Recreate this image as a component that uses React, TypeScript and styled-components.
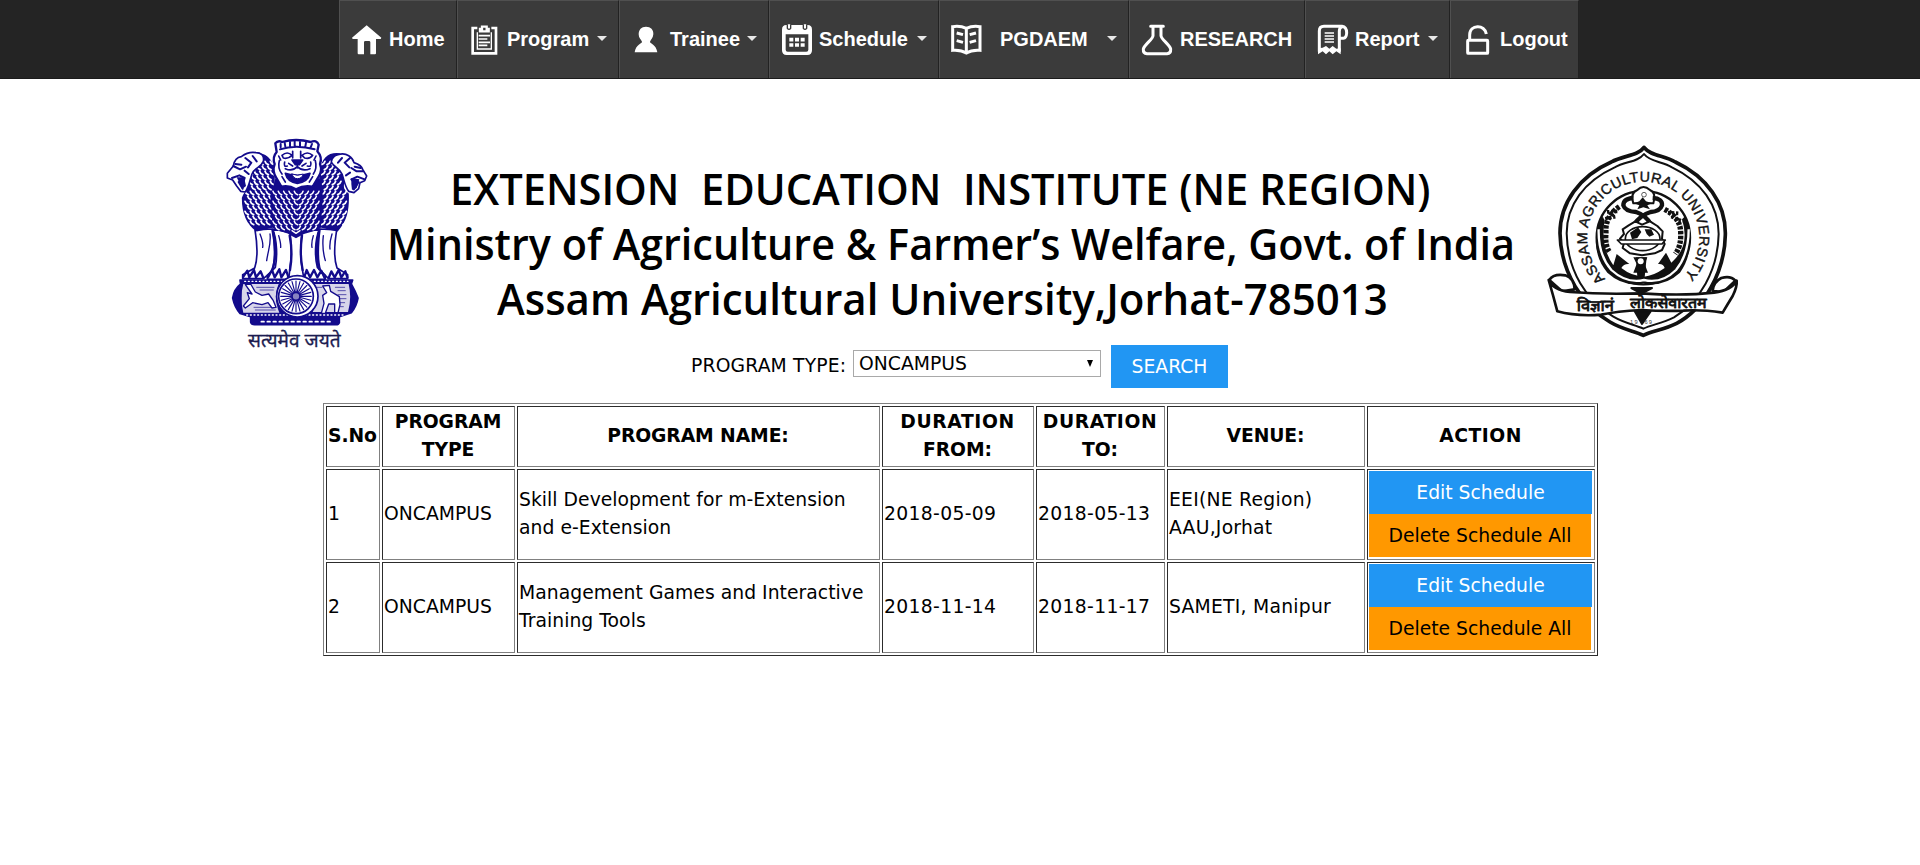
import React from 'react';
import styled, { createGlobalStyle } from 'styled-components';

const GlobalStyle = createGlobalStyle`
  * { box-sizing: border-box; }
  body {
    margin: 0;
    background: #fff;
    color: #000;
    font-family: 'DejaVu Sans', Verdana, sans-serif;
    font-size: 18.75px;
    line-height: 28px;
  }
`;

const NavBar = styled.nav`
  display: flex;
  height: 79px;
  padding-left: 339px;
  background: #242424;
  border-bottom: 1px solid #1b1b1b;
`;

const NavItem = styled.a<{ $width: number }>`
  display: flex;
  align-items: center;
  width: ${(p) => p.$width}px;
  padding: 0 11px 0 12px;
  background: #3b3b3b;
  border-left: 1px solid #505050;
  border-top: 1px solid #505050;
  border-right: 1px solid #222;
  color: #fff;
  font: bold 20px/24px 'Liberation Sans', Arial, sans-serif;
`;

const NavIcon = styled.svg`
  flex: none;
  width: 30px;
  height: 30px;
  margin-top: 1px;
  overflow: visible;
`;

const NavLabel = styled.span<{ $gap: number }>`
  margin: -2px 0 0 ${(p) => p.$gap}px;
  white-space: nowrap;
`;

const Caret = styled.span`
  margin: -2px 0 0 auto;
  border: 5px solid transparent;
  border-top-color: #e8e8e8;
  border-bottom: 0;
`;

const Banner = styled.header`
  display: flex;
  height: 264px;
  padding-left: 223px;
`;

const Emblem = styled.svg`
  flex: none;
  width: 147px;
  height: 214px;
  margin-top: 58px;
  overflow: visible;
`;

const Seal = styled.svg`
  flex: none;
  width: 200px;
  height: 200px;
  margin: 62px 0 0 2px;
`;

const Titles = styled.div`
  flex: none;
  width: 1170px;
  padding-top: 82px;
`;

const Title = styled.h1<{ $indent: number; $stretch: number }>`
  margin: 0 0 0 ${(p) => p.$indent}px;
  font: 600 43.5px/55px 'Open Sans', 'Noto Sans', sans-serif;
  white-space: pre;
  transform: scaleX(${(p) => p.$stretch});
  transform-origin: 0 50%;
`;

const SearchForm = styled.form`
  display: flex;
  align-items: flex-start;
  height: 58px;
  margin-top: 2px;
  padding-left: 691px;
`;

const SearchLabel = styled.label`
  width: 162px;
  padding-top: 7px;
  letter-spacing: 0.15px;
  white-space: nowrap;
`;

const SelectBox = styled.div`
  display: flex;
  align-items: center;
  justify-content: space-between;
  width: 248px;
  height: 27px;
  margin: 5px 10px 0 0;
  padding: 0 7px 0 5px;
  border: 1px solid #a9a9a9;
`;

const SelectArrow = styled.span`
  border: 3.5px solid transparent;
  border-top: 7px solid #000;
  border-bottom: 0;
`;

const Button = styled.button<{ $tone?: 'warn'; $width: number }>`
  display: block;
  width: ${(p) => p.$width}px;
  height: 43px;
  padding: 0;
  border: 0;
  background: ${(p) => (p.$tone === 'warn' ? '#ff9800' : '#2196f3')};
  color: ${(p) => (p.$tone === 'warn' ? '#000' : '#fff')};
  font: inherit;
  white-space: nowrap;
`;

const Table = styled.table`
  width: 1275px;
  margin-left: 323px;
  table-layout: fixed;
  border: 1px solid;
  border-color: #808080 #2c2c2c #2c2c2c #808080;
  border-spacing: 2px;
`;

const cellBorder = `
  border: 1px solid;
  border-color: #2c2c2c #808080 #808080 #2c2c2c;
`;

const HeadCell = styled.th<{ $width: number; $spacing?: number }>`
  ${cellBorder}
  width: ${(p) => p.$width}px;
  height: 61px;
  padding: 0 2px 2px 1px;
  letter-spacing: -0.1px;
  &::first-line { letter-spacing: ${(p) => p.$spacing ?? -0.1}px; }
`;

const Cell = styled.td<{ $spacing?: number }>`
  ${cellBorder}
  height: 91px;
  padding: 0 1px 2px;
  letter-spacing: ${(p) => p.$spacing ?? 0}px;
`;

const ActionCell = styled(Cell)`
  padding: 1px;
  vertical-align: top;
`;

const icons: Record<string, React.ReactNode> = {
  home: <path fill="#fff" d="M44 1 88 38 86 42H72V85Q72 88 69 88H55V52Q55 48 51 48H40Q36 48 36 52V88H20Q17 88 17 85V42H2L0 38Z" />,
  program: (
    <g fill="none" stroke="#fff" strokeWidth="8">
      <path d="M22 9H8V85H78V9H64" />
      <path d="M22 22V72H64V22" strokeWidth="4" />
      <path d="M30 19H56V12H50V5H36V12H30Z" strokeWidth="7" />
      <path d="M26 32H60M26 42H52M26 52H60M26 61H52" strokeWidth="5" />
    </g>
  ),
  trainee: (
    <path fill="#fff" d="M42 5C56 5 65 14 64 28C63 39 57 44 54 50C53 56 73 57 76 82H8C11 57 31 56 30 50C27 44 20 39 20 28C20 14 28 5 42 5Z" />
  ),
  schedule: (
    <g>
      <path fill="#fff" fillRule="evenodd" d="M13 0H77Q90 0 90 14V76Q90 90 76 90H14Q0 90 0 76V14Q0 0 13 0ZM11 28V74Q11 80 17 80H73Q79 80 79 74V28Z" />
      <path d="M16 -2V10Q21 16 26 10V-2M64 -2V10Q69 16 74 10V-2" fill="#fff" stroke="#3b3b3b" strokeWidth="4" />
      <path d="M22 44H68M22 60H68" stroke="#fff" strokeWidth="11" strokeDasharray="12 5" />
    </g>
  ),
  book: (
    <g fill="none" stroke="#fff" strokeWidth="9">
      <path d="M43 10C30 4 16 3 2 5V76C16 75 30 76 43 84C56 76 70 75 84 76V5C70 3 56 4 43 10ZM43 10V88" />
      <path d="M14 24 33 29M14 47 33 52M53 29 72 24M53 52 72 47" />
    </g>
  ),
  flask: (
    <path fill="none" stroke="#fff" strokeWidth="9" strokeLinecap="round" strokeLinejoin="round" d="M26 4H64M33 6V32C33 42 6 60 4 72Q3 85 15 86H75Q87 85 86 72C84 60 57 42 57 32V6" />
  ),
  report: (
    <g fill="none" stroke="#fff" strokeWidth="9">
      <path d="M4 80V18Q4 4 18 4H72Q86 6 86 24Q85 39 76 40H66M64 80V18Q64 8 73 5" />
      <path fill="#fff" stroke="none" d="M0 70 14 68 24 63 34 71 44 63 55 71 68 70V88L55 79 44 88 34 79 24 88 14 79 0 88Z" />
      <path d="M20 24H48M20 33H48M20 42H48M20 51H48" strokeWidth="4" />
    </g>
  ),
  lock: (
    <g fill="none" stroke="#fff" strokeWidth="9">
      <rect x="14" y="46" width="60" height="39" rx="2" />
      <path d="M20 46V30C20 -2 66 -3 70 27" />
    </g>
  ),
};

const navItems = [
  { label: 'Home', icon: 'home', width: 118, gap: 7 },
  { label: 'Program', icon: 'program', width: 162, gap: 7, menu: true },
  { label: 'Trainee', icon: 'trainee', width: 150, gap: 8, menu: true },
  { label: 'Schedule', icon: 'schedule', width: 170, gap: 7, menu: true },
  { label: 'PGDAEM', icon: 'book', width: 190, gap: 18, menu: true },
  { label: 'RESEARCH', icon: 'flask', width: 176, gap: 8 },
  { label: 'Report', icon: 'report', width: 145, gap: 7, menu: true },
  { label: 'Logout', icon: 'lock', width: 129, gap: 7 },
];

const NAVY = '#130b8c';

// Rows of short curved locks that make up the lions' manes.
function locks(x0: number, x1: number, y0: number, y1: number, axis: number) {
  let d = '';
  let row = 0;
  for (let y = y0; y < y1; y += 15, row++) {
    for (let x = x0 + (row % 2) * 8; x < x1; x += 16) {
      const s = x < axis ? 1 : -1;
      d += `M${x - 5 * s} ${y - 6}q${2 * s} ${8} ${10 * s} ${10}`;
    }
  }
  return d;
}

const spokes = Array.from({ length: 24 }, (_, i) => {
  const a = (i * Math.PI) / 12;
  return `M${258 + 14 * Math.cos(a)} ${527 + 14 * Math.sin(a)}L${258 + 46 * Math.cos(a)} ${527 + 46 * Math.sin(a)}`;
}).join('');

function StateEmblem() {
  return (
    <Emblem viewBox="39 49 441 642" role="img" fill="none" stroke={NAVY} strokeWidth="5" strokeLinejoin="round" strokeLinecap="round">
      {/* legs */}
      <path fill="#fff" d="M135 328C142 370 145 410 134 442L98 462V474H160L186 452C196 420 196 370 186 325ZM380 328C373 370 370 410 381 442L413 462V474H356L332 452C322 420 324 370 330 325Z" />
      <path fill="#fff" d="M188 325C202 360 202 410 196 440L172 464V476H236L240 440C246 400 244 365 240 335ZM328 325C314 360 314 410 322 440L346 464V476H282L276 440C270 400 272 365 276 335Z" />
      <path strokeWidth="7" d="M190 336C199 370 198 420 187 446M326 336C318 370 319 420 328 446M239 345C246 380 245 420 240 448M276 345C271 380 272 420 278 448" />
      <path strokeWidth="4" d="M150 340C158 360 160 370 158 380M180 340C184 370 174 390 170 420M206 345C212 365 213 370 212 380M310 345C304 365 304 370 306 380M366 340C360 360 358 370 360 385M340 345C336 380 340 400 346 420" />
      <path strokeWidth="7" d="M100 468 112 450 118 470 132 448 138 470 152 452 160 472M174 470 186 448 194 470 208 446 214 470 228 448 236 472M282 472 290 448 300 470 312 448 322 470 334 450 344 472M356 472 364 452 374 470 386 448 394 470 406 452 412 470" />
      {/* side manes */}
      <path fill={NAVY} d="M130 98C170 96 186 120 192 150L190 318 140 330C112 310 98 280 98 232C102 216 118 205 118 186ZM388 100C350 96 338 120 330 150L332 318 382 330C408 300 416 270 414 220C398 210 398 200 400 186Z" />
      <path stroke="#fff" strokeWidth="5.2" d={locks(122, 190, 128, 214, 300) + locks(110, 188, 218, 318, 300)} />
      <path stroke="#fff" strokeWidth="5.2" d={locks(340, 392, 128, 212, 200) + locks(340, 410, 218, 318, 200)} />
      {/* side faces */}
      <path fill="#fff" d="M138 96C114 92 102 102 94 108C78 110 72 124 70 136L52 158V172L68 178 80 196 92 212 106 214C118 196 120 176 126 160C134 140 152 142 160 122C164 104 152 96 138 96Z" />
      <path fill="#fff" d="M384 102C410 94 428 110 432 126C446 130 456 136 460 150L470 166 464 180 450 186 446 204 432 216 416 212C404 196 402 176 396 160C388 142 372 140 364 124C366 110 374 104 384 102Z" />
      <path strokeWidth="6" d="M70 136 90 146 108 138M76 130 94 132M66 172 88 164 104 172 98 190 86 184 98 204M106 112 124 126 114 140M128 106 140 122M104 150 116 160M460 152 440 152 424 142M452 142 434 138M464 176 442 168 424 176 436 190 446 184 432 206M420 112 404 126 418 140M396 112 384 126M420 156 408 164" />
      <path fill={NAVY} stroke="none" d="M80 170 102 170 108 196 96 206 90 190ZM424 172 448 176 440 202 426 208 424 190Z" />
      {/* front mane */}
      <path fill={NAVY} d="M198 176 184 230 190 320C210 334 228 330 244 342L258 350 272 342C290 330 312 334 330 320L336 230 332 176Z" />
      <path stroke="#fff" strokeWidth="4.8" d={locks(194, 328, 218, 326, 259)} />
      <path stroke="#fff" strokeWidth="4" d="M246 330 258 338 270 330" />
      {/* front face */}
      <path fill="#fff" d="M196 68Q204 58 216 64Q258 52 302 64Q320 56 326 72L322 92Q338 110 330 130Q338 150 326 168L308 198Q282 192 258 206Q236 192 214 198L198 170Q186 150 194 130Q186 110 200 94Z" strokeWidth="7" />
      <path strokeWidth="6" d="M212 80V70M226 78 224 66M240 76V64M254 76V62M270 76V64M286 78 288 66M302 80 306 70M210 86Q258 70 314 86" />
      <path strokeWidth="5" d="M216 104Q232 90 246 104Q234 116 220 112ZM276 104Q292 90 308 104Q300 116 284 112ZM248 92V112M272 92V112" />
      <path fill={NAVY} d="M246 118H278L268 132H256Z" />
      <path strokeWidth="5" d="M262 130V142M262 138Q246 154 226 144M262 138Q278 154 300 144M224 124Q220 140 232 136M302 124Q306 140 292 136M208 120Q202 142 216 160M316 120Q322 142 310 160M216 168 226 184M308 168 298 184M206 106 212 118M318 106 312 118M236 128 248 136M288 128 276 136" />
      <path fill={NAVY} d="M226 158Q262 170 300 158Q294 184 262 188Q232 184 226 158Z" />
      <path fill="#fff" strokeWidth="3" d="M246 160Q262 168 280 160Q276 174 262 174Q250 174 246 160Z" />
      {/* abacus */}
      <path fill={NAVY} d="M90 478H428L424 490Q436 512 444 532Q440 556 424 576L388 588V606Q386 612 378 612H134Q124 612 122 604V588L90 578Q74 560 68 532Q72 506 92 490Z" />
      <path fill="#d8d6ea" stroke="none" d="M100 490H206Q188 528 208 576H100Q88 532 100 490ZM310 490H416Q426 532 414 574H308Q330 530 310 490Z" />
      <path strokeWidth="2" d="M140 500H192M150 508H190M132 560H190M136 568H196M320 500H336M376 500H404M384 510H406M384 522H408M384 534H408M386 546H404M386 558H400M86 500V566M94 494V572" />
      <path strokeWidth="4" stroke="#fff" strokeDasharray="3 8" d="M104 482H414M110 583H404" />
      <path strokeWidth="5" stroke="#fff" strokeDasharray="8 10" d="M154 603H360" />
      <path fill="#fff" strokeWidth="4" d="M106 492 122 490 136 514 156 524 176 520 190 540 198 560 186 562 174 546 156 552 128 546 106 562 100 556 118 534 112 516 126 520Z" />
      <path fill="#fff" strokeWidth="4" d="M338 496 358 494 362 512 388 528 390 552 384 576H374L374 550 356 550 346 578 334 578 342 548 338 524 350 516Z" />
      <circle cx="262" cy="527" r="62" fill="#fff" />
      <circle cx="258" cy="527" r="52" strokeWidth="5" />
      <path strokeWidth="3.4" d={spokes} />
      <circle cx="258" cy="527" r="12" fill="#8883c0" strokeWidth="5" />
      <text x="114" y="679" fill="#1c1c50" stroke="#1c1c50" strokeWidth="1" fontFamily="'Noto Sans Devanagari', 'Noto Sans', sans-serif" fontSize="59" textLength="278" lengthAdjust="spacingAndGlyphs">सत्यमेव जयते</text>
    </Emblem>
  );
}

function UniversitySeal() {
  return (
    <Seal viewBox="36 35 600 600" role="img" fill="none" stroke="#111" strokeWidth="6" strokeLinejoin="round">
      <defs>
        <path id="ring" d="M232 454A168 168 0 1 1 452 450" />
      </defs>
      <path fill="#fff" strokeWidth="11" d="M342 54C362 80 402 78 436 98C530 142 588 222 586 316C584 430 520 540 440 582C400 602 368 604 340 618C312 604 280 602 240 578C160 532 92 430 90 312C90 222 148 140 244 98C280 78 324 80 342 54Z" />
      <path d="M342 74C360 98 396 96 426 114C514 156 566 228 566 314C564 424 508 518 432 564C396 582 366 586 340 598C314 586 284 582 250 562C170 516 112 424 110 312C110 228 162 156 254 114C286 96 324 98 342 74Z" strokeWidth="6" />
      <text fill="#111" stroke="#111" strokeWidth="1.2" fontFamily="'Liberation Sans', Arial, sans-serif" fontSize="43">
        <textPath href="#ring" startOffset="8" textLength="792" lengthAdjust="spacing">ASSAM AGRICULTURAL UNIVERSITY</textPath>
      </text>
      <circle cx="340" cy="325" r="140" strokeWidth="7" />
      <path fill="#111" stroke="none" d="M214 260Q174 360 232 430Q280 474 340 462Q402 474 450 430Q500 360 466 260L456 270Q482 350 424 400L408 370 384 404Q400 402 404 416Q370 440 342 442Q304 440 274 416Q282 402 298 404L260 374 250 408Q210 350 224 272Z" />
      <path stroke="#fff" strokeWidth="7" d="M206 300Q204 376 244 422Q290 464 342 452Q396 464 438 422Q476 376 476 300" />
      {/* grain ears */}
      <path strokeWidth="16" strokeDasharray="10 4" d="M268 232Q224 262 228 310Q224 350 240 370M404 240Q452 266 452 310Q454 350 436 374" />
      <path strokeWidth="11" strokeDasharray="7 5" d="M256 262 216 270M424 262 458 276M262 246 228 248M414 250 446 252" />
      {/* lamp and horns */}
      <path fill="#fff" strokeWidth="6" d="M310 222Q300 190 322 182Q340 164 360 182Q380 190 370 222Z" />
      <path fill="#111" stroke="none" d="M312 222 328 216 338 204 348 216 366 222 352 228 360 240 340 234 322 240 328 228Z" />
      <circle cx="342" cy="196" r="7" strokeWidth="2" />
      <path strokeWidth="13" d="M310 206Q280 208 280 228Q286 246 318 248Q348 258 362 284M368 206Q398 208 396 228Q390 246 362 248Q330 258 314 284" />
      {/* gear and globe */}
      <path fill="#fff" strokeWidth="6" d="M296 288 316 276 336 286 360 276 382 290 398 306 396 328 404 344 396 362 374 372 336 378 300 372 278 356 282 340 270 328 282 314 278 300Z" />
      <ellipse cx="338" cy="328" rx="52" ry="36" strokeWidth="5" />
      <path fill="#111" stroke="none" d="M300 310 324 294 334 308 322 326 306 330ZM344 300 364 300 372 316 358 322 350 314ZM318 384 350 384 344 444H322Z" />
      <path fill="#fff" strokeWidth="5" d="M262 332H406L396 344H274Z" />
      <path fill="#111" stroke="none" d="M310 384H352L344 404 354 430H310L320 404Z" />
      <circle cx="332" cy="396" r="9" fill="#fff" stroke="none" />
      {/* ribbon */}
      <path fill="#111" d="M304 476H366L340 490 326 488ZM314 546H362L336 584Z" />
      <path fill="#fff" strokeWidth="8" d="M58 452Q70 432 106 438Q132 446 134 480L96 486ZM616 454Q602 438 574 446Q550 458 548 484L578 490Z" />
      <path fill="#fff" strokeWidth="8" d="M56 452Q68 482 120 488Q220 496 334 492Q460 500 552 490Q606 482 620 454Q622 472 608 500Q592 526 578 550Q510 540 460 544Q400 546 334 542Q260 546 214 556Q140 562 82 546Q70 500 56 452Z" />
      <text x="140" y="544" fill="#111" stroke="#111" strokeWidth="2.4" fontFamily="'Noto Sans Devanagari', 'Noto Sans', sans-serif" fontSize="46" textLength="112" lengthAdjust="spacingAndGlyphs">विज्ञानं</text>
      <text x="300" y="537" fill="#111" stroke="#111" strokeWidth="2.4" fontFamily="'Noto Sans Devanagari', 'Noto Sans', sans-serif" fontSize="45" textLength="230" lengthAdjust="spacingAndGlyphs">लोकसेवारतम</text>
      <text x="300" y="584" fill="#333" stroke="none" fontFamily="'Liberation Sans', Arial, sans-serif" fontSize="17" textLength="66">19 &nbsp;69</text>
    </Seal>
  );
}

const columns = [
  { name: 'S.No', width: 54 },
  { name: 'PROGRAM TYPE', width: 133 },
  { name: 'PROGRAM NAME:', width: 363 },
  { name: 'DURATION FROM:', width: 152, spacing: 0.6 },
  { name: 'DURATION TO:', width: 129, spacing: 0.6 },
  { name: 'VENUE:', width: 198 },
  { name: 'ACTION', width: 228, spacing: 0.5 },
];

const bodySpacing = [0, 0, 0.04, 0.33, 0.33, 0.25];

const rows = [
  ['1', 'ONCAMPUS', 'Skill Development for m-Extension and e-Extension', '2018-05-09', '2018-05-13', 'EEI(NE Region) AAU,Jorhat'],
  ['2', 'ONCAMPUS', 'Management Games and Interactive Training Tools', '2018-11-14', '2018-11-17', 'SAMETI, Manipur'],
];

export default function App() {
  return (
    <>
      <GlobalStyle />
      <NavBar>
        {navItems.map((item) => (
          <NavItem key={item.label} $width={item.width}>
            <NavIcon viewBox="0 0 90 90">{icons[item.icon]}</NavIcon>
            <NavLabel $gap={item.gap}>{item.label}</NavLabel>
            {item.menu && <Caret />}
          </NavItem>
        ))}
      </NavBar>
      <Banner>
        <StateEmblem />
        <Titles>
          <Title $indent={80} $stretch={0.957}>EXTENSION  EDUCATION  INSTITUTE (NE REGION)</Title>
          <Title $indent={17} $stretch={0.951}>Ministry of Agriculture &amp; Farmer’s Welfare, Govt. of India</Title>
          <Title $indent={127} $stretch={0.965}>Assam Agricultural University,Jorhat-785013</Title>
        </Titles>
        <UniversitySeal />
      </Banner>
      <SearchForm onSubmit={(e) => e.preventDefault()}>
        <SearchLabel>PROGRAM TYPE:</SearchLabel>
        <SelectBox>
          ONCAMPUS
          <SelectArrow />
        </SelectBox>
        <Button $width={117}>SEARCH</Button>
      </SearchForm>
      <Table>
        <thead>
          <tr>
            {columns.map((c) => (
              <HeadCell key={c.name} $width={c.width} $spacing={c.spacing}>{c.name}</HeadCell>
            ))}
          </tr>
        </thead>
        <tbody>
          {rows.map((row) => (
            <tr key={row[0]}>
              {row.map((value, i) => (
                <Cell key={i} $spacing={bodySpacing[i]}>{value}</Cell>
              ))}
              <ActionCell>
                <Button $width={223}>Edit Schedule</Button>
                <Button $tone="warn" $width={222}>Delete Schedule All</Button>
              </ActionCell>
            </tr>
          ))}
        </tbody>
      </Table>
    </>
  );
}
